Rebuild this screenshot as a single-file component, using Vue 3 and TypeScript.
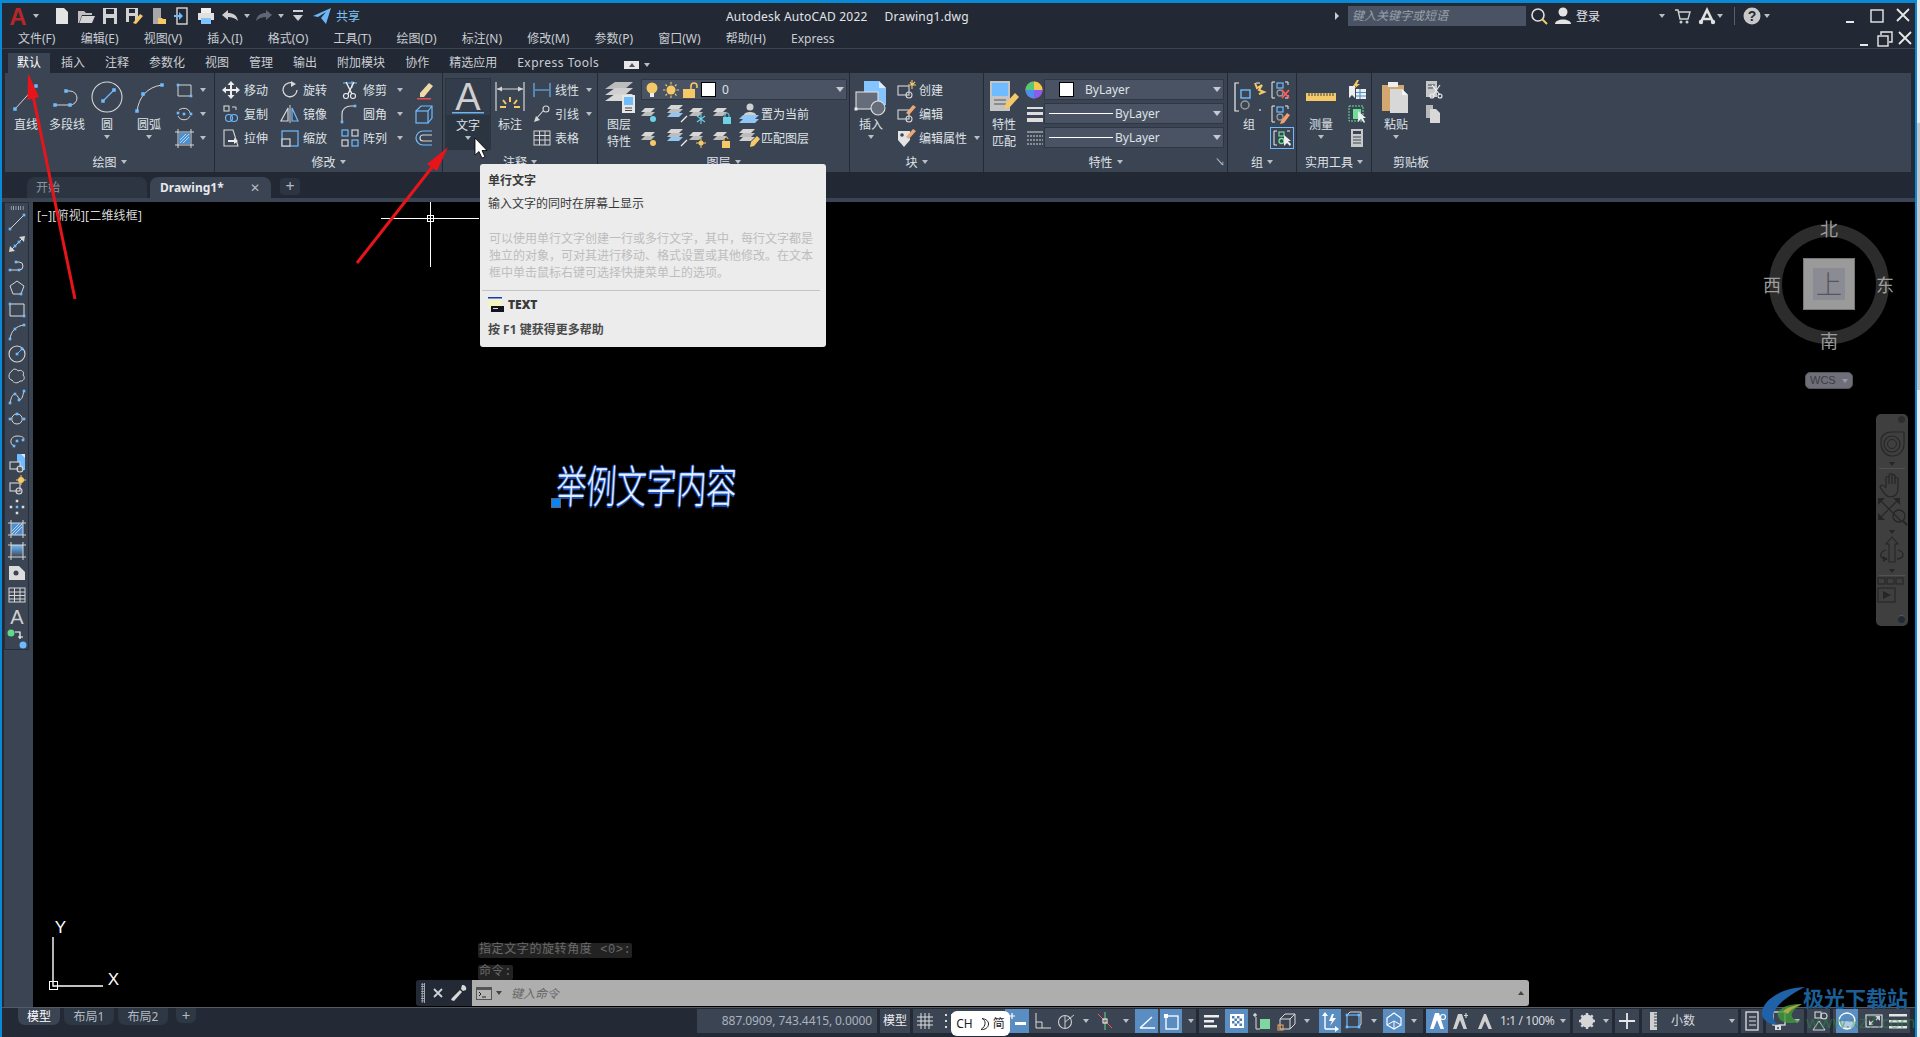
<template>
  <div class="window">
    <div class="edge-left"></div>
    <div class="content">
      <div class="accent"></div>

      <header class="titlebar">
        <div class="qat">
          <div class="logo"><Ico n="logo" :s="22" /><i class="caret"></i></div>
          <div v-for="q in quick" :key="q.k" class="qcell" :class="{ narrow: q.c }">
            <i v-if="q.c" class="caret"></i>
            <Ico v-else :n="q.k" />
          </div>
          <span class="share">共享</span>
        </div>
        <div class="title">Autodesk AutoCAD 2022<span class="dwg">Drawing1.dwg</span></div>
        <i class="tri-right"></i>
        <div class="search">键入关键字或短语</div>
        <div class="tcell"><Ico n="find" /></div>
        <div class="tcell"><Ico n="user" /></div>
        <span class="login">登录</span>
        <i class="caret login-caret"></i>
        <div class="tcell cart"><Ico n="cart" /></div>
        <div class="tcell"><Ico n="aLogo" /></div>
        <i class="caret a-caret"></i>
        <div class="tsep"></div>
        <div class="tcell"><Ico n="help" /></div>
        <i class="caret"></i>
        <div class="winbtns">
          <Ico n="wMin" /><Ico n="wMax" /><Ico n="wClose" />
        </div>
      </header>

      <nav class="menubar">
        <span v-for="m in menus" :key="m">{{ m }}</span>
        <div class="winbtns small">
          <Ico n="wMin" /><Ico n="wRestore" /><Ico n="wClose" />
        </div>
      </nav>

      <div class="ribbon-tabs">
        <span v-for="(t, i) in ribbonTabs" :key="t" class="rtab" :class="{ active: i === 0 }">{{ t }}</span>
        <span class="panel-toggle"><i class="caret up"></i></span>
        <i class="caret"></i>
      </div>

      <section class="ribbon">
        <!-- 绘图 -->
        <div class="panel p-draw">
          <div class="pbody">
            <div class="big w42"><Ico n="line32" :s="32" /><span>直线</span></div>
            <div class="big w40"><Ico n="pline32" :s="32" /><span>多段线</span></div>
            <div class="big w40"><Ico n="circle32" :s="32" /><span>圆</span><i class="caret"></i></div>
            <div class="big w44"><Ico n="arc32" :s="32" /><span>圆弧</span><i class="caret"></i></div>
            <div class="scol draw-col">
              <div v-for="r in drawCol" :key="r" class="sr"><Ico :n="r" /><i class="caret"></i></div>
            </div>
          </div>
          <div class="ptitle">绘图<i class="caret"></i></div>
        </div>

        <!-- 修改 -->
        <div class="panel p-modify">
          <div class="pbody">
            <div v-for="(col, ci) in modifyCols" :key="ci" class="scol" :class="'mod' + ci">
              <div v-for="r in col" :key="r.i" class="sr">
                <Ico :n="r.i" /><span v-if="r.t" class="st">{{ r.t }}</span><i v-if="r.c" class="caret"></i>
              </div>
            </div>
          </div>
          <div class="ptitle">修改<i class="caret"></i></div>
        </div>

        <!-- 注释 -->
        <div class="panel p-note">
          <div class="pbody">
            <div class="big hot">
              <div class="hot-top"><Ico n="text32" :s="32" /></div>
              <span>文字</span><i class="caret"></i>
            </div>
            <div class="big w38"><Ico n="dim32" :s="32" /><span>标注</span></div>
            <div class="scol note-col">
              <div v-for="r in noteCol" :key="r.i" class="sr">
                <Ico :n="r.i" /><span class="st">{{ r.t }}</span><i v-if="r.c" class="caret"></i>
              </div>
            </div>
          </div>
          <div class="ptitle">注释<i class="caret"></i></div>
        </div>

        <!-- 图层 -->
        <div class="panel p-layer">
          <div class="pbody">
            <div class="big w42"><Ico n="layer32" :s="32" /><span>图层<br />特性</span></div>
            <div class="layer-right">
              <div class="combo layer-combo">
                <Ico n="bulb" /><Ico n="sun" /><Ico n="lock" />
                <b class="swatch black"></b><span class="zero">0</span><i class="combo-caret"></i>
              </div>
              <div v-for="(row, ri) in layerRows" :key="ri" class="sr layer-row">
                <Ico v-for="x in row.i" :key="x" :n="x" :s="24" /><span class="st">{{ row.t }}</span>
              </div>
            </div>
          </div>
          <div class="ptitle">图层<i class="caret"></i></div>
        </div>

        <!-- 块 -->
        <div class="panel p-block">
          <div class="pbody">
            <div class="big w42"><Ico n="insert32" :s="32" /><span>插入</span><i class="caret"></i></div>
            <div class="scol block-col">
              <div v-for="r in blockCol" :key="r.i" class="sr">
                <Ico :n="r.i" /><span class="st">{{ r.t }}</span><i v-if="r.c" class="caret"></i>
              </div>
            </div>
          </div>
          <div class="ptitle">块<i class="caret"></i></div>
        </div>

        <!-- 特性 -->
        <div class="panel p-prop">
          <div class="pbody">
            <div class="big w40"><Ico n="match32" :s="32" /><span>特性<br />匹配</span></div>
            <div class="prop-grid">
              <div class="prop-row">
                <Ico n="wheel" /><div class="combo"><b class="swatch"></b><span class="by1">ByLayer</span><i class="combo-caret"></i></div>
              </div>
              <div class="prop-row">
                <Ico n="lweight" /><div class="combo"><b class="lsample"></b><span>ByLayer</span><i class="combo-caret"></i></div>
              </div>
              <div class="prop-row">
                <Ico n="ltype" /><div class="combo"><b class="lsample"></b><span>ByLayer</span><i class="combo-caret"></i></div>
              </div>
            </div>
          </div>
          <div class="ptitle">特性<i class="caret"></i><i class="launcher">↘</i></div>
        </div>

        <!-- 组 -->
        <div class="panel p-group">
          <div class="pbody">
            <div class="big w42"><Ico n="group32" :s="32" /><span>组</span></div>
            <div class="scol group-col">
              <div class="sr"><Ico n="ungroup" /></div>
              <div class="sr"><Ico n="groupEdit" /></div>
              <div class="sr on"><Ico n="groupSel" /></div>
            </div>
          </div>
          <div class="ptitle">组<i class="caret"></i></div>
        </div>

        <!-- 实用工具 -->
        <div class="panel p-util">
          <div class="pbody">
            <div class="big w48"><Ico n="ruler32" :s="32" /><span>测量</span><i class="caret"></i></div>
            <div class="scol util-col">
              <div class="sr"><Ico n="quick" /></div>
              <div class="sr"><Ico n="selSim" /></div>
              <div class="sr"><Ico n="calc" /></div>
            </div>
          </div>
          <div class="ptitle">实用工具<i class="caret"></i></div>
        </div>

        <!-- 剪贴板 -->
        <div class="panel p-clip">
          <div class="pbody">
            <div class="big w48"><Ico n="paste32" :s="32" /><span>粘贴</span><i class="caret"></i></div>
            <div class="scol clip-col">
              <div class="sr"><Ico n="cut" /></div>
              <div class="sr"><Ico n="copyDoc" /></div>
            </div>
          </div>
          <div class="ptitle clip-title">剪贴板</div>
        </div>
      </section>

      <div class="doc-tabs">
        <div class="dtab">开始</div>
        <div class="dtab current"><b>Drawing1*</b><span class="dclose">✕</span></div>
        <div class="dplus">+</div>
      </div>
      <div class="doc-bar"></div>

      <main class="work">
        <aside class="rail">
          <div class="toolbar">
            <div class="grip-dots"></div>
            <div v-for="t in toolIcons" :key="t" class="tool"><Ico :n="t" /></div>
          </div>
        </aside>

        <div class="canvas">
          <div class="vp-label">[−][俯视][二维线框]</div>

          <div class="cross"><i class="ch"></i><i class="cv"></i><i class="cb"></i></div>

          <div class="sample-text">举例文字内容</div>
          <div class="sample-grip"></div>

          <div class="viewcube">
            <div class="ring"></div>
            <div class="cube"><div class="cube-in">上</div></div>
            <span class="dir n">北</span><span class="dir s">南</span>
            <span class="dir w">西</span><span class="dir e">东</span>
            <div class="wcs">WCS<i class="caret"></i></div>
          </div>

          <div class="navbar">
            <i class="nav-dot top"></i>
            <Ico n="navWheel" :s="30" />
            <i class="caret"></i>
            <div class="nav-sep"></div>
            <Ico n="navHand" :s="30" />
            <Ico class="nav-zoom" n="navZoom" :s="30" />
            <i class="caret"></i>
            <Ico n="navOrbit" :s="30" />
            <i class="caret"></i>
            <div class="nav-sep"></div>
            <Ico n="navShow" :s="30" />
            <i class="nav-dot bottom"></i>
          </div>

          <svg class="ucs" width="100" height="80" viewBox="0 0 100 80">
            <path d="M20 22V71H70" fill="none" stroke="#fff" stroke-width="1.4" />
            <rect x="16.500" y="66.500" width="8" height="8" fill="none" stroke="#fff" />
            <text x="27.500" y="17.500" class="ucs-t">Y</text>
            <text x="80.500" y="70" class="ucs-t">X</text>
          </svg>

          <div class="history">
            <div><span>指定文字的旋转角度 &lt;0&gt;:</span></div>
            <div><span>命令:</span></div>
          </div>

          <div class="cmdline">
            <div class="cmd-dark">
              <i class="cmd-grip"></i>
              <Ico n="cmdX" :s="16" />
              <Ico n="wrench" :s="18" />
            </div>
            <div class="cmd-input">
              <Ico n="console" :s="18" />
              <i class="caret dark"></i>
              <span class="cmd-hint">键入命令</span>
              <i class="caret dark up end"></i>
            </div>
          </div>
        </div>
      </main>

      <footer class="bottom">
        <div class="layouts">
          <span class="ltab active">模型</span>
          <span class="ltab">布局1</span>
          <span class="ltab">布局2</span>
          <span class="lplus">+</span>
        </div>
        <div class="status">
          <div v-for="(g, gi) in statusGroups" :key="gi" class="sg" :style="{ width: g.w + 'px' }">
            <template v-for="(it, ii) in g.items" :key="ii">
              <i v-if="it.c" class="scaret" :style="{ width: it.w + 'px' }"><i class="caret"></i></i>
              <span v-else-if="it.t" class="stext" :class="it.cls" :style="{ width: it.w + 'px' }">{{ it.t }}</span>
              <div v-else class="sitem" :class="{ on: it.a }" :style="{ width: it.w + 'px' }">
                <Ico v-if="it.i" :n="it.i" />
              </div>
            </template>
          </div>
        </div>
      </footer>
    </div>

    <div class="edge-right">
      <div class="edge-blue"></div>
      <div class="edge-scroll"><i></i><i class="thumb"></i><i></i></div>
    </div>

    <!-- 覆盖层 -->
    <div class="tooltip">
      <div class="tt-title">单行文字</div>
      <div class="tt-sub">输入文字的同时在屏幕上显示</div>
      <div class="tt-desc">可以使用单行文字创建一行或多行文字，其中，每行文字都是独立的对象，可对其进行移动、格式设置或其他修改。在文本框中单击鼠标右键可选择快捷菜单上的选项。</div>
      <div class="tt-line"></div>
      <div class="tt-cmd"><Ico n="ttText" :s="16" /><b>TEXT</b></div>
      <div class="tt-help">按 F1 键获得更多帮助</div>
    </div>

    <div class="ime">CH <Ico n="moon" :s="14" /> 简</div>

    <svg class="marks" width="1920" height="1037" viewBox="0 0 1920 1037">
      <path d="M75 299 33.500 98" stroke="#e8141b" stroke-width="3" fill="none" />
      <path d="M28 73 39 97 27.500 100Z" fill="#e8141b" />
      <path d="M357 263 433 166" stroke="#e8141b" stroke-width="3" fill="none" />
      <path d="M448 147 437 171 427 164Z" fill="#e8141b" />
      <path d="M475 138V155L479 151.500 482 158 485 157 482 150.500H487Z" fill="#fff" stroke="#000" stroke-width="0.8" />
      <path d="M1805 987C1778 988 1760 1003 1762 1015 1764 1022 1771 1025 1779 1025 1768 1019 1770 1005 1805 987Z" fill="#1f62a8" />
      <path d="M1802 1004C1788 1003 1776 1009 1778 1016 1780 1023 1790 1025 1801 1021 1791 1020 1786 1014 1802 1004Z" fill="#3f9a3a" opacity=".8" />
      <path d="M1783 1011C1788 1007 1795 1005 1802 1004 1795 1007 1790 1010 1788 1014Z" fill="#c9b24a" opacity=".8" />
    </svg>
    <div class="wm-cn">极光下载站</div>
    <div class="wm-en">www.xz7.com</div>
  </div>
</template>

<script setup lang="ts">
import { h } from 'vue'

const gy = '#d6d6d6'
const bl = '#6ebcff'
const ye = '#f5c868'
const F = (d: string, c = gy) => `<path d="${d}" fill="${c}" stroke="none"/>`
const T = (d: string, c = gy, w = 1) => `<path d="${d}" stroke="${c}" stroke-width="${w}" fill="none"/>`
const G = (x: number, y: number, s = 2.600, c = bl) =>
  `<rect x="${x - s / 2}" y="${y - s / 2}" width="${s}" height="${s}" fill="${c}" stroke="none"/>`
const C = (x: number, y: number, r: number, c = gy, w = 1.1) =>
  `<circle cx="${x}" cy="${y}" r="${r}" stroke="${c}" stroke-width="${w}" fill="none"/>`
const D = (x: number, y: number, r: number, c = gy) =>
  `<circle cx="${x}" cy="${y}" r="${r}" fill="${c}" stroke="none"/>`
const R = (x: number, y: number, w: number, h: number, c = gy) =>
  `<rect x="${x}" y="${y}" width="${w}" height="${h}" fill="${c}" stroke="none"/>`
const B = (x: number, y: number, w: number, h: number, c = gy, sw = 1.1) =>
  `<rect x="${x}" y="${y}" width="${w}" height="${h}" fill="none" stroke="${c}" stroke-width="${sw}"/>`
const TX = (x: number, y: number, s: number, t: string, c = gy, bold = false) =>
  `<text x="${x}" y="${y}" font-size="${s}" text-anchor="middle" font-family="Liberation Sans" font-weight="${bold ? 700 : 400}" fill="${c}" stroke="none">${t}</text>`
const stack = F('M4 6H14L10 10H0Z') + F('M4 10H14L10 14H0Z', '#bdbdbd')

const icons: Record<string, string> = {
  logo: TX(10, 20, 24, 'A', '#b8262a', true),
  new: F('M4 2H12L16 6V18H4Z', '#e4e4e4'),
  open: F('M2 5H8L10 7H16V9H6L3 17H2Z', '#bfbfbf') + F('M6 10H19L16 17H3.500Z', '#d4d4d4'),
  save: F('M3 2H17V18H3Z', '#d2d2d2') + R(6, 3, 8, 5, '#232a35') + R(6, 12, 8, 6, '#232a35'),
  saveAs: F('M2 2H14V16H2Z', '#d2d2d2') + R(5, 3, 6, 4, '#232a35') + R(5, 10, 6, 6, '#232a35') + F('M9 17 16 8 19 10 12 18Z', ye),
  openWeb: F('M5 2H13V18H5Z', '#a8a8a8') + F('M10 12H14L15 13H18V18H10Z', ye),
  saveWeb: B(5, 2, 10, 16, '#d8d8d8', 1.4) + F('M2 9H7V6L11 10 7 14V11H2Z', bl),
  print: R(5, 2, 10, 5, '#eee') + R(2, 7, 16, 7, '#e0e0e0') + R(5, 12, 10, 6, '#7fc4ff'),
  undo: F('M2 9 8 4V7C13 7 17 9 18 15 15 12 12 11 8 11V14Z', '#cfcfcf'),
  redo: F('M18 9 12 4V7C7 7 3 9 2 15 5 12 8 11 12 11V14Z', '#5f6774'),
  qa: F('M5 4H15V6H5Z', '#cfcfcf') + F('M5 9H15L10 15Z', '#cfcfcf'),
  sendTo: F('M1 10 19 2 14 18 9 12 14 6 6 11Z', '#6db6f5'),
  find: C(9, 9, 6, '#e0e0e0', 1.6) + T('M13 13 18 18', ye, 2),
  user: D(10, 6, 4.500, '#e4e4e4') + F('M2 18C2 12 18 12 18 18Z', '#e4e4e4'),
  cart: T('M2 4H5L7 13H15L17 6H6', '#d0d0d0', 1.4) + D(8, 16, 1.500, '#d0d0d0') + D(14, 16, 1.500, '#d0d0d0'),
  aLogo: T('M4 16 10 4 16 16M6 13H14', '#e0e0e0', 2.600) + D(4, 16, 2.200, '#e0e0e0') + D(16, 16, 2.200, '#e0e0e0'),
  help: D(10, 10, 8.500, '#c8c8c8') + TX(10, 15, 14, '?', '#232a35', true),
  wMin: R(5, 15, 8, 2, '#e8e8e8'),
  wMax: B(4, 4, 12, 12, '#e8e8e8', 1.4),
  wRestore: B(3, 7, 10, 10, '#e8e8e8', 1.4) + T('M6 6V3H17V13H14', '#e8e8e8', 1.4),
  wClose: T('M4 3 16 15M16 3 4 15', '#e8e8e8', 1.800),

  line32: T('M5 28 26 5') + G(5, 28, 3.500) + G(26, 5, 3.500),
  pline32: T('M4 24H19A7 7 0 0 0 19 10H15') + G(4, 24, 3.500) + G(19, 24, 3.500) + G(15, 10, 3.500),
  circle32: C(16, 16, 15) + T('M13 19 23 9', bl, 1.3) + G(12, 20, 3.500) + G(23, 9, 3.500),
  arc32: T('M4 30C6 16 14 6 29 4') + G(4, 30, 3.500) + G(10, 13, 3.500) + G(29, 4, 3.500),
  rect: T('M4 5H17V16H4Z') + G(4, 5) + G(17, 16),
  ellipse: T('M5 6C9 3 15 4 16 9M16 12C14 17 6 17 4 12') + G(10, 10) + G(17, 10) + G(4, 9),
  hatch: F('M5 5H16V16H5Z', '#4e8fd0') + T('M1 4H20M1 17H20M4 1V20M17 1V20') + T('M6 15 15 6M9 15 15 9M6 12 12 6', '#cfe6ff', 0.8),
  move: F('M10 1 13.500 5H11V9H15V6.500L19 10 15 13.500V11H11V15H13.500L10 19 6.500 15H9V11H5V13.500L1 10 5 6.500V9H9V5H6.500Z', '#ececec'),
  rotate: T('M14 4A7 7 0 1 0 17 10', gy, 1.3) + F('M11 1V7L16 4Z', gy),
  trim: T('M12 1V8M3 3H17', bl, 1) + T('M6 2 12 14M14 2 8 14', '#eee', 1.4) + C(6, 16, 2.500, '#eee') + C(13, 16, 2.500, '#eee'),
  copy: B(3, 2, 5, 5, gy) + T('M11 3H15V6', gy) + C(8, 14, 3.500, bl) + C(13, 14, 3.500, bl),
  mirror: T('M8 4V17H1Z', gy, 1.2) + T('M12 4 18 17H12Z', bl, 1.2) + T('M10 1V19', gy, 1),
  fillet: T('M2 19V10C2 5 6 2 11 2H16', gy, 1.2) + G(2, 18) + G(15, 2),
  stretch: T('M3 2H12L17 18H3Z', gy, 1.1) + F('M7 12H13V10L17 13 13 16V14H7Z', '#ececec'),
  scale: B(2, 3, 16, 15, bl, 1.2) + F('M2 11H10V18H2Z', '#3b4453') + B(2, 11, 8, 7, gy, 1.2),
  array: B(2, 2, 6, 6, bl, 1.2) + B(12, 2, 6, 6, gy, 1.2) + B(2, 12, 6, 6, gy, 1.2) + B(12, 12, 6, 6, bl, 1.2),
  erase: F('M6 13 15 3 19 6 10 17H6Z', '#f0d9a8') + R(3, 18, 14, 1.500, '#e25050'),
  box3d: B(2, 7, 12, 12, bl, 1.2) + T('M2 7 7 2H18V14L14 19M14 7 18 2', bl, 1.2),
  offset: T('M18 3H9A7 7 0 0 0 9 17H18', bl, 1.2) + T('M18 7H9A3 3 0 0 0 9 13H18', gy, 1.2),

  text32: TX(16, 28, 38, 'A', '#cfcfcf') + R(0, 30, 32, 1.500, '#6eb6f0'),
  dim32: T('M2 1V30M30 1V30', gy, 1.2) + T('M3 8H29', gy, 1) + F('M3 8 8 5.500V10.500Z') + F('M29 8 24 5.500V10.500Z') +
    T('M16 16V21M9 19 12 23M23 19 20 23M6 26H12M20 26H26', ye, 2),
  dimLin: T('M2 3V17M18 3V17M3 10H17', bl, 1.1),
  leader: C(14, 5, 3, gy) + T('M11 7 4 15', gy, 1.1) + F('M2 18 4 12 8 16Z'),
  table: B(2, 3, 16, 14, gy, 1) + T('M2 7.500H18M2 12H18M7.500 3V17M13 3V17', gy, 1),

  layer32: F('M12 1H30L22 8H2Z', '#bcbcbc') + F('M12 7H30L22 14H2Z', '#cfcfcf') + F('M12 13H30L22 20H2Z', '#d8d8d8') +
    R(19, 14, 13, 18, '#e6e6e6') + R(21, 16, 9, 8, bl) + T('M22 27H29M22 29.500H29', '#444', 1),
  bulb: D(10, 8, 5.500, ye) + R(8, 13, 4, 4, '#eee'),
  sun: D(10, 10, 4.500, ye) + T('M10 2V4.500M10 15.500V18M2 10H4.500M15.500 10H18M4.500 4.500 6 6M14 14 15.500 15.500M15.500 4.500 14 6M6 14 4.500 15.500', ye, 1.1),
  lock: R(3, 9, 12, 9, ye) + T('M11 9V6A3 3 0 0 1 17 6V8', ye, 1.6),
  lyOff: stack + D(12, 17, 3, '#6fd3e8'),
  lyPrev: F('M6 3H18L14 7H2Z') + F('M6 7H18L14 11H2Z', '#bdbdbd') + F('M6 11H18L14 15H2Z', '#8fc6f5') + T('M22 14 16 20', '#eee', 1.2),
  lyFrz: stack + T('M12 12V22M8 14 16 20M16 14 8 20', '#6fd3e8', 1.1),
  lyLck: stack + R(10, 15, 8, 7, '#6fd3e8') + T('M12 15V13A2 2 0 0 1 16 13V15', '#6fd3e8'),
  lyCur: D(13, 5, 3.500, '#cfcfcf') + F('M7 13C7 9 19 9 19 13Z', '#cfcfcf') + F('M6 13H22L18 17H2Z', '#8fc6f5') + F('M6 17H22L18 21H2Z', '#8fc6f5'),
  lyOn: stack + D(12, 17, 3, ye),
  lyNext: F('M6 3H18L14 7H2Z') + F('M6 7H18L14 11H2Z', '#bdbdbd') + F('M6 11H18L14 15H2Z', '#8fc6f5') + T('M16 20 22 14', '#eee', 1.2),
  lyThaw: stack + D(12, 17, 2.500, ye) + T('M12 12V22M7 17H17', ye, 1),
  lyUnl: stack + R(9, 15, 8, 7, ye) + T('M11 15V13A2 2 0 0 1 15 13', ye),
  lyMatch: F('M6 3H18L14 7H2Z') + F('M6 7H18L14 11H2Z', '#bdbdbd') + F('M6 11H18L14 15H2Z', '#cfcfcf') + F('M14 16 20 10 23 13 17 20 13 21Z', ye),

  insert32: F('M9 0H24L31 7V24H9Z', '#84c4ff') + F('M24 0 31 7H24Z', '#dcecff') +
    F('M1 11H23V28H1Z', '#656d7a') + B(1, 11, 22, 17, '#e0e0e0') + D(23, 27, 7, '#656d7a') + C(23, 27, 7, '#e0e0e0') + G(1, 28, 3, '#eee'),
  blkNew: B(2, 6, 11, 9, gy) + C(13, 15, 3, gy) + T('M14 2 16 5 19 2M16 0V9M12 5H20', ye, 1.1),
  blkEdit: B(2, 6, 11, 9, gy) + C(13, 15, 3, gy) + F('M10 9 17 1 20 3 13 11Z', '#e8a878'),
  blkAttr: F('M2 3H14V12L8 19 2 12Z', '#e4e4e4') + D(6, 7, 1.800, '#3b4453') + F('M10 9 17 1 20 3 13 11Z', '#e8a878'),

  match32: R(2, 0, 20, 30, '#c4c4c4') + R(4, 2, 16, 13, bl) + T('M6 19H18M6 23H18', '#555', 1.1) + F('M18 22 27 12 31 16 22 26 16 28Z', ye),
  wheel: D(10, 10, 8.500, '#e86c3c') + F('M10 10V1.500A8.500 8.500 0 0 1 18.500 10Z', '#f2c94c') + F('M10 10H18.500A8.500 8.500 0 0 1 10 18.500Z', '#8a5cf0') + F('M10 10V18.500A8.500 8.500 0 0 1 1.500 10Z', '#4a90f0') + F('M10 10H1.500A8.500 8.500 0 0 1 10 1.500Z', '#52c878'),
  lweight: R(3, 3, 16, 2, '#ddd') + R(3, 8, 16, 3, '#ddd') + R(3, 14, 16, 4, '#ddd'),
  ltype: T('M3 4H19', gy, 1) + `<path d="M3 8H19M3 12H19M3 16H19" stroke="${gy}" stroke-width="1" stroke-dasharray="2 1" fill="none"/>`,

  group32: T('M6 2H2V30H6M23 2H27M27 30V28', '#eee', 1.2) + B(8, 9, 9, 8, bl, 1.4) + C(12, 24, 4, '#999', 1.500) + T('M22 2 24 7 29 4 26 9 31 11 26 13', ye, 2),
  ungroup: T('M5 2H2V18H5M15 2H18V5M18 15V18H15', '#eee') + B(7, 3, 6, 5, bl, 1.2) + C(10, 13, 3, '#999', 1.3) + T('M12 10 19 18M19 10 12 18', '#ff5b5b', 1.800),
  groupEdit: T('M5 2H2V18H5M15 2H18V5', '#eee') + B(7, 3, 6, 5, bl, 1.2) + C(10, 13, 3, '#999', 1.3) + F('M11 17 17 9 20 11 14 19 10 20Z', '#f0a070'),
  groupSel: T('M5 3H2V17H5M15 3H18', '#eee') + B(7, 4, 5, 4, '#6fe09a', 1.2) + C(9.500, 13, 2.500, '#6fe09a', 1.3) + F('M12 7V18L15 15 18 18 19 16 16 13H19Z', '#eee'),

  ruler32: R(1, 12, 30, 8, ye) + T('M4 12V15M7 12V15M10 12V15M13 12V15M16 12V15M19 12V15M22 12V15M25 12V15M28 12V15', '#3b4453', 1),
  quick: F('M2 6V18L5 15 8 18V6Z', '#eee') + R(9, 9, 10, 10, '#eee') + T('M9 12.500H19M9 16H19M13 9V19', '#4a8fd0', 1.1) + F('M10 0 6 6H9L7 9 13 4H10L12 0Z', ye),
  selSim: `<rect x="2" y="2" width="14" height="15" fill="none" stroke="#6fe09a" stroke-dasharray="2 1"/>` + R(6, 5, 8, 10, '#6fe09a') + F('M11 7V18L14 15 17 19 18 18 16 14H19Z', '#eee'),
  calc: R(4, 1, 12, 18, '#c8c8c8') + R(6, 3, 8, 3, '#3b4453') + T('M6 9H14M6 12H14M6 15H14', '#3b4453', 1.1),
  paste32: R(2, 4, 22, 26, '#d2a870') + F('M8 1H18V6H8Z', '#eee') + F('M10 8H22L28 14V32H10Z', '#d8d8d8') + F('M22 8 28 14H22Z', '#f4f4f4'),
  cut: R(3, 1, 11, 16, '#c8c8c8') + T('M5 5H12M5 8H10', '#3b4453') + T('M9 5 17 15M17 5 10 15', '#eee', 1.2) + C(9, 16, 2, '#eee') + C(17, 16, 2, '#eee'),
  copyDoc: F('M3 1H10V14H3Z', '#b8b8b8') + F('M7 5H13L17 9V19H7Z', '#d8d8d8'),

  tLine: T('M3 17 17 3') + G(3, 17) + G(17, 3),
  tRay: T('M5 15 15 5') + F('M18 2 17 8 12 3Z') + F('M2 18 3 12 8 17Z') + G(8, 12) + G(12, 8),
  tPline: T('M3 14H12A4 4 0 0 0 12 6H9') + G(3, 14) + G(12, 14) + G(9, 6),
  tPoly: T('M10 3 17 8 14 16H6L3 8Z') + G(14, 16),
  tRect: T('M3 4H17V16H3Z', '#e0e0e0') + G(3, 4) + G(17, 16),
  tArc: T('M3 17C4 9 9 4 17 3') + G(3, 17) + G(8, 7) + G(17, 3),
  tCircle: C(10, 10, 8) + T('M10 10 15 5', bl) + G(10, 10) + G(15, 5),
  tCloud: T('M5 5C6 2 10 3 11 5 14 3 18 6 16 9 19 12 16 16 13 15 11 18 6 17 5 14 1 14 1 7 5 5Z'),
  tSpline: T('M3 16C5 6 8 5 11 10S15 12 17 4') + G(3, 16) + G(8, 7) + G(12, 13) + G(17, 4),
  tEll: T('M10 5C3 5 3 15 10 15S17 5 10 5') + G(3, 10) + G(17, 10) + G(10, 5),
  tEllArc: T('M7 15C2 13 3 5 10 5S18 8 16 9') + G(7, 15) + G(10, 10) + G(16, 9),
  tInsert: F('M10 1H18V17H10Z', bl) + F('M18 1 14 1 18 5Z', '#dcecff') + F('M3 9H13V15H3Z', '#3b4453') + B(3, 9, 10, 7, gy) + C(13, 16, 3, gy) + D(13, 16, 2, '#555'),
  tBlock: B(3, 8, 10, 8, gy) + C(12, 16, 3, gy) + D(14, 5, 3, ye) + T('M14 0V10M9 5H19', ye, 1),
  tPoint: G(10, 4, 2.500, '#ddd') + G(4, 10, 2.500, '#ddd') + G(16, 10, 2.500, '#ddd') + G(10, 16, 2.500, '#ddd') + G(10, 10, 2.500, bl),
  tHatch: F('M4 4H16V16H4Z', '#4e8fd0') + T('M1 4H19M1 16H19M4 1V19M16 1V19') + T('M5 15 15 5M8 15 15 8M5 12 12 5', '#cfe6ff', 0.8),
  tGrad: `<defs><linearGradient id="gr" x1="0" y1="0" x2="0" y2="1"><stop offset="0" stop-color="#6ebcff"/><stop offset="1" stop-color="#3b4453"/></linearGradient></defs><rect x="4" y="4" width="12" height="12" fill="url(#gr)"/>` + T('M1 4H19M1 16H19M4 1V19M16 1V19'),
  tRegion: F('M2 3H12L18 9V17H2Z', '#dcdcdc') + D(9, 10, 2.500, '#3b4453'),
  tTable: B(2, 3, 16, 14, gy, 1) + T('M2 7H18M2 10.500H18M2 14H18M7.500 3V17M13 3V17', gy, 1),
  tText: TX(10, 17, 20, 'A', '#cfcfcf'),
  tAdd: D(4, 4, 3.500, '#5fd98a') + D(16, 16, 3.500, bl) + T('M8 3H13V10M11 8H16', '#fff', 1.2),

  cmdX: T('M4 4 12 12M12 4 4 12', '#cfd3d8', 1.800),
  wrench: F('M13 1C16 1 18 3 17 6L14 7 12 5ZM11 6 13 8 5 17 2 16 3 14Z', '#d8d8d8'),
  console: R(1, 3, 16, 13, '#555') + R(2, 6, 14, 9, '#b4b4b4') + T('M4 8 6 10 4 12M7 13H11', '#222', 1),

  grid: T('M6 2V18M10 2V18M14 2V18M2 6H18M2 10H18M2 14H18', '#e0e0e0', 1),
  snap: G(7, 4, 2, '#ddd') + G(13, 4, 2, '#ddd') + G(7, 10, 2, '#ddd') + G(13, 10, 2, '#ddd') + G(7, 16, 2, '#ddd') + G(13, 16, 2, '#ddd'),
  infer: T('M5 2V8M2 5H8', '#fff', 1.2) + R(8, 11, 11, 3, '#fff'),
  ortho: T('M4 2V17H19M4 11H10V17', '#dcdcdc', 1),
  polar: C(9, 11, 6.500, '#cfcfcf') + T('M9 11 18 4', '#cfcfcf') + T('M9 5V17', '#cfcfcf', 1),
  osnap: T('M10 1V19', '#5fd98a') + T('M3 3 17 17', '#ff5555') + B(8, 8, 4, 4, '#fff', 1),
  iso: T('M3 17H18M3 17 15 6', '#fff', 1.4),
  track: B(5, 5, 12, 13, '#fff', 1.3) + G(5, 5, 4, '#fff'),
  lw: R(3, 4, 15, 2.500, '#eee') + R(3, 9, 10, 2.500, '#eee') + R(3, 14, 13, 2.500, '#eee'),
  transp: R(3, 3, 14, 14, '#fff') + R(5, 5, 2.500, 2.500, '#4f7fb0') + R(10, 5, 2.500, 2.500, '#4f7fb0') + R(7.500, 7.500, 2.500, 2.500, '#4f7fb0') + R(12.500, 7.500, 2.500, 2.500, '#4f7fb0') + R(5, 10, 2.500, 2.500, '#4f7fb0') + R(10, 10, 2.500, 2.500, '#4f7fb0') + R(7.500, 12.500, 2.500, 2.500, '#4f7fb0') + R(12.500, 12.500, 2.500, 2.500, '#4f7fb0'),
  selCyc: T('M3 2V6M1 4H5', '#fff', 1) + T('M4 6V18H8', '#ddd') + R(8, 8, 10, 10, '#7fd6a0'),
  cube3: T('M3 8H13V18H3ZM3 8 8 3H18V13L13 18M13 8 18 3', '#dcdcdc') + B(1, 14, 5, 5, '#f0a050', 1.1),
  ucsDyn: T('M5 18V4M5 18H18', '#fff', 1.4) + F('M5 1 8 5H2Z', '#fff') + F('M19 18 15 15V21Z', '#fff') + F('M12 3 9 10H12L10 15 16 7H12.500L14 3Z', '#fff'),
  gizmo: B(4, 4, 12, 12, bl, 1.2) + T('M4 4 7 1H18V13L16 16', '#dcdcdc', 1) + G(4, 4) + G(16, 4) + G(4, 16) + G(16, 16),
  gizmo2: T('M10 2 17 7V14L10 18 3 14V7Z', '#fff', 1.2) + T('M10 10V18M10 10 3 14M10 10 17 14', '#fff', 1),
  anno: F('M8 2 12 2 17 18H13.500L10 9 6.500 18H3Z', '#fff') + C(16, 6, 2.500, '#fff', 1.1),
  annoA: F('M8 3 12 3 17 18H13.500L10 9 6.500 18H3Z', '#cfcfcf') + T('M16 2V7M14 4.500H18', '#cfcfcf', 1.2),
  annoB: F('M9 3 11 3 17 18H13.500L10 10 6.500 18H3Z', '#cfcfcf'),
  gear: D(10, 10, 6.500, '#d6d6d6') + D(10, 10, 2.500, '#3b4453') + T('M10 2V18M2 10H18M4.300 4.300 15.700 15.700M15.700 4.300 4.300 15.700', '#d6d6d6', 2.400),
  plus: T('M10 2V18M2 10H18', '#e8e8e8', 1.800),
  unit: R(6, 1, 7, 18, '#cfcfcf') + T('M10 3H13M10 6H13M10 9H13M10 12H13M10 15H13', '#3b4453', 1),
  quickP: B(4, 1, 12, 18, '#e0e0e0', 1.3) + T('M7 6H14M7 10H14M7 14H14', '#e0e0e0', 1.1),
  isolate: B(5, 1, 12, 13, '#ddd', 1.3) + R(7, 14, 6, 5, '#ddd') + D(10, 17, 1, '#3b4453'),
  hardw: B(6, 1, 6, 6, '#d6d6d6') + C(15, 5, 3, '#d6d6d6') + T('M10 10 16 19H4Z', '#d6d6d6'),
  hw: C(10, 10, 8, '#fff', 1.3) + F('M2 11C8 8 13 13 18 9 17 15 13 18 10 18 6 18 3 15 2 11Z', 'rgba(255,255,255,.55)'),
  clean: B(2, 4, 16, 12, '#e0e0e0', 1.1) + T('M6 13 9 10M12 9 15 6', '#d0d0d0', 1.2) + F('M5 9 5 14 9 14Z') + F('M16 5 11 5 16 10Z'),
  burger: R(1, 3, 18, 2.500, '#e4e4e4') + R(1, 9, 18, 2.500, '#e4e4e4') + R(1, 15, 18, 2.500, '#e4e4e4'),

  ttText: R(0, 0, 14, 1.500, '#1a34c8') + R(0, 2, 14, 9, '#f4f4c0') + R(3, 9, 13, 6, '#15151f') + R(5, 11, 5, 1, '#ddd'),
  moon: T('M6 1.500C10 3 10.500 9 5 12.500 9 13 12.500 10.500 12.500 7 12.500 4 10 2 6 1.500Z', '#222', 1),

  navWheel: T('M4 12C4 6 9 3 15 3H27V15C27 22 22 27 15 27 9 27 4 21 4 15Z', '#262626', 1.2) + C(15, 15, 8, '#262626', 1.2) + C(15, 15, 4.500, '#262626', 1),
  navHand: T('M9 17V8A1.500 1.500 0 0 1 12 8V14M12 13V5A1.500 1.500 0 0 1 15 5V14M15 13V6A1.500 1.500 0 0 1 18 6V14M18 14V9A1.500 1.500 0 0 1 21 9V18C21 24 18 27 13 27 9 27 6 22 3 17 4 14 7 15 9 18', '#262626', 1.2),
  navZoom: T('M2 2 24 24M22 2 2 22', '#262626', 1.2) + F('M1 1H8L1 8Z', '#262626') + F('M23 1H16L23 8Z', '#262626') + F('M1 23H8L1 16Z', '#262626') + C(22, 19, 6, '#262626', 1.3) + T('M26 24 30 28', '#262626', 2),
  navOrbit: T('M15 1 21 8H18V26H12V8H9Z', '#262626', 1.1) + T('M9 14C2 16 2 22 9 23M21 14C28 16 28 22 20 23', '#262626', 1.3) + F('M11 23 6 20V26Z', '#262626'),
  navShow: B(1, 1, 7, 6, '#262626', 1.1) + B(10, 1, 7, 6, '#262626', 1.1) + B(19, 1, 7, 6, '#262626', 1.1) + B(1, 11, 17, 14, '#262626', 1.1) + F('M6 14 14 18 6 22Z', '#262626'),
}

const Ico = (p: { n: string; s?: number }) => {
  const s = p.s ?? 20
  return h('svg', {
    class: 'ico',
    width: s,
    height: s,
    viewBox: `0 0 ${s} ${s}`,
    innerHTML: icons[p.n] ?? '',
  })
}
Ico.props = ['n', 's']

const quick = [
  { k: 'new' }, { k: 'open' }, { k: 'save' }, { k: 'saveAs' }, { k: 'openWeb' }, { k: 'saveWeb' }, { k: 'print' },
  { k: 'undo' }, { k: 'c1', c: true }, { k: 'redo' }, { k: 'c2', c: true }, { k: 'qa' }, { k: 'sendTo' },
]

const menus = ['文件(F)', '编辑(E)', '视图(V)', '插入(I)', '格式(O)', '工具(T)', '绘图(D)', '标注(N)', '修改(M)', '参数(P)', '窗口(W)', '帮助(H)', 'Express']
const ribbonTabs = ['默认', '插入', '注释', '参数化', '视图', '管理', '输出', '附加模块', '协作', '精选应用', 'Express Tools']

const drawCol = ['rect', 'ellipse', 'hatch']
const modifyCols = [
  [{ i: 'move', t: '移动' }, { i: 'copy', t: '复制' }, { i: 'stretch', t: '拉伸' }],
  [{ i: 'rotate', t: '旋转' }, { i: 'mirror', t: '镜像' }, { i: 'scale', t: '缩放' }],
  [{ i: 'trim', t: '修剪', c: true }, { i: 'fillet', t: '圆角', c: true }, { i: 'array', t: '阵列', c: true }],
  [{ i: 'erase' }, { i: 'box3d' }, { i: 'offset' }],
]
const noteCol = [
  { i: 'dimLin', t: '线性', c: true },
  { i: 'leader', t: '引线', c: true },
  { i: 'table', t: '表格' },
]
const layerRows = [
  { i: ['lyOff', 'lyPrev', 'lyFrz', 'lyLck', 'lyCur'], t: '置为当前' },
  { i: ['lyOn', 'lyNext', 'lyThaw', 'lyUnl', 'lyMatch'], t: '匹配图层' },
]
const blockCol = [
  { i: 'blkNew', t: '创建' },
  { i: 'blkEdit', t: '编辑' },
  { i: 'blkAttr', t: '编辑属性', c: true },
]

const toolIcons = ['tLine', 'tRay', 'tPline', 'tPoly', 'tRect', 'tArc', 'tCircle', 'tCloud', 'tSpline', 'tEll', 'tEllArc', 'tInsert', 'tBlock', 'tPoint', 'tHatch', 'tGrad', 'tRegion', 'tTable', 'tText', 'tAdd']

interface StatusItem { w: number; i?: string; a?: boolean; c?: boolean; t?: string; cls?: string }
const I = (i: string, w: number, a = false): StatusItem => ({ i, w, a })
const S = (w: number): StatusItem => ({ w })
const K = (w: number): StatusItem => ({ w, c: true })
const X = (t: string, w: number, cls: string): StatusItem => ({ t, w, cls })

const statusGroups: { w: number; items: StatusItem[] }[] = [
  { w: 180, items: [X('887.0909, 743.4415, 0.0000', 175, 'coord')] },
  { w: 30, items: [X('模型', 30, 'model')] },
  {
    w: 283,
    items: [
      I('grid', 24), I('snap', 24), S(44), I('infer', 24, true), S(1), I('ortho', 24), I('polar', 24), S(2), K(12), S(1),
      I('osnap', 24), S(2), K(13), S(3), I('iso', 23, true), S(2), I('track', 22, true), S(3), K(11),
    ],
  },
  {
    w: 224,
    items: [
      I('lw', 24), S(2), I('transp', 23, true), S(2), I('selCyc', 24), S(1), I('cube3', 24), S(2), K(12), S(6),
      I('ucsDyn', 22, true), S(1), I('gizmo', 22), S(4), K(12), S(3), I('gizmo2', 22, true), S(3), K(12),
    ],
  },
  { w: 144, items: [I('anno', 22, true), S(1), I('annoA', 22), S(2), I('annoB', 24), X('1:1 / 100%', 61, 'scale-t'), K(10)] },
  { w: 39, items: [I('gear', 27), K(12)] },
  { w: 24, items: [I('plus', 24)] },
  { w: 96, items: [I('unit', 24), X('小数', 60, 'unit-t'), K(12)] },
  { w: 22, items: [I('quickP', 22)] },
  { w: 38, items: [I('isolate', 24), K(14)] },
  { w: 23, items: [I('hardw', 23)] },
  { w: 77, items: [S(3), I('hw', 22, true), S(4), I('clean', 24), I('burger', 24)] },
]
</script>

<style>
html,
body {
  margin: 0;
  background: #222934;
}
</style>

<style scoped>
.window {
  position: relative;
  display: flex;
  width: 1920px;
  height: 1037px;
  overflow: hidden;
  background: #222934;
  font-family: "Noto Sans", "Noto Sans CJK SC", sans-serif;
  font-size: 12px;
  line-height: 17px;
  color: #c9cdd3;
}
.ico {
  display: block;
  flex: none;
  overflow: visible;
}
.caret {
  display: block;
  flex: none;
  width: 0;
  height: 0;
  border-left: 3px solid transparent;
  border-right: 3px solid transparent;
  border-top: 4px solid #b9bdc4;
}
.caret.up {
  border-top: 0;
  border-bottom: 4px solid #555;
}
.caret.dark {
  border-top-color: #444;
}
.caret.dark.up {
  border-top: 0;
  border-bottom: 4px solid #444;
}
.edge-left {
  flex: none;
  width: 2px;
  background: #0a8ad6;
}
.content {
  flex: none;
  width: 1913px;
  display: flex;
  flex-direction: column;
}
.edge-right {
  flex: none;
  width: 5px;
  display: flex;
}
.edge-blue {
  width: 2px;
  background: #0a8ad6;
}
.edge-scroll {
  flex: 1;
  display: flex;
  flex-direction: column;
}
.edge-scroll i {
  flex: 1;
  background: #ececec;
}
.edge-scroll .thumb {
  flex: none;
  height: 267px;
  background: #c6c6c6;
}
.edge-scroll i:first-child {
  flex: none;
  height: 123px;
}
.accent {
  flex: none;
  height: 3px;
  background: #0a8ad6;
}

/* 标题栏 */
.titlebar {
  flex: none;
  height: 26px;
  display: flex;
  align-items: center;
  color: #e2e4e8;
}
.qat {
  flex: none;
  width: 724px;
  display: flex;
  align-items: center;
  padding-left: 6px;
  box-sizing: border-box;
}
.logo {
  width: 42px;
  display: flex;
  align-items: center;
  gap: 3px;
}
.qcell {
  width: 24px;
  display: flex;
  justify-content: center;
}
.qcell.narrow {
  width: 10px;
}
.share {
  margin-left: 2px;
  color: #7ec2f5;
}
.title {
  flex: none;
  width: 609px;
  box-sizing: border-box;
  white-space: nowrap;
  letter-spacing: 0.2px;
}
.dwg {
  margin-left: 17px;
}
.tri-right {
  flex: none;
  width: 0;
  height: 0;
  border-top: 4px solid transparent;
  border-bottom: 4px solid transparent;
  border-left: 4px solid #c9cdd3;
  margin-right: 9px;
}
.search {
  flex: none;
  width: 178px;
  height: 20px;
  line-height: 20px;
  background: #4a5364;
  padding-left: 4px;
  box-sizing: border-box;
  font-style: italic;
  color: #9aa0aa;
}
.tcell {
  flex: none;
  width: 24px;
  display: flex;
  justify-content: center;
}
.search + .tcell {
  margin-left: 1px;
}
.login {
  flex: none;
  width: 83px;
  margin-left: 1px;
}
.login-caret {
  margin-right: 6px;
}
.a-caret {
  margin-left: -2px;
}
.tsep {
  flex: none;
  width: 1px;
  height: 18px;
  background: #59616e;
  margin: 0 5px 0 11px;
}
.winbtns {
  margin-left: auto;
  margin-right: 2px;
  display: flex;
  gap: 6px;
}
.menubar {
  flex: none;
  height: 19px;
  display: flex;
  align-items: center;
  gap: 25.200px;
  padding-left: 16px;
  border-bottom: 1px solid #3b4453;
  white-space: nowrap;
}
.winbtns.small {
  gap: 0;
  margin-right: 0;
}

/* 功能区选项卡 */
.ribbon-tabs {
  flex: none;
  height: 24px;
  display: flex;
  align-items: flex-end;
  padding-left: 6px;
  gap: 2px;
}
.rtab {
  height: 20px;
  line-height: 19px;
  padding: 0 9px;
  white-space: nowrap;
}
.rtab:nth-child(11) {
  letter-spacing: 0.5px;
}
.rtab.active {
  background: #3b4453;
  color: #fff;
}
.panel-toggle {
  width: 15px;
  height: 8px;
  margin: 0 0 4px 14px;
  background: #e6e6e6;
  display: flex;
  justify-content: center;
  align-items: center;
}
.ribbon-tabs > .caret {
  margin: 0 0 6px 3px;
}

/* 功能区 */
.ribbon {
  flex: none;
  height: 99px;
  margin: 0 4px 0 3px;
  display: flex;
  background: #3b4453;
}
.panel {
  flex: none;
  box-sizing: border-box;
  display: flex;
  flex-direction: column;
  border-right: 1px solid #232a35;
  color: #dfe2e6;
}
.pbody {
  flex: 1;
  display: flex;
  min-height: 0;
}
.ptitle {
  position: relative;
  flex: none;
  height: 20px;
  display: flex;
  align-items: center;
  justify-content: center;
  gap: 4px;
}
.launcher {
  position: absolute;
  right: 2px;
  top: 2px;
  font-style: normal;
  font-size: 10px;
  color: #b9bdc4;
}
.p-draw { width: 210px; }
.p-modify { width: 228px; }
.p-note { width: 155px; }
.p-layer { width: 252px; }
.p-block { width: 134px; }
.p-prop { width: 244px; }
.p-group { width: 69px; }
.p-util { width: 75px; }
.p-clip { flex: 1; border-right: 0; }
.clip-title { width: 78px; }

.big {
  flex: none;
  display: flex;
  flex-direction: column;
  align-items: center;
  padding-top: 8px;
  box-sizing: border-box;
  text-align: center;
}
.big > span {
  margin-top: 3px;
  white-space: nowrap;
}
.big > .caret {
  margin-top: 2px;
}
.w38 { width: 38px; }
.w40 { width: 40px; }
.w42 { width: 42px; }
.w44 { width: 44px; }
.w48 { width: 48px; }
.big.hot {
  width: 46px;
  height: 72px;
  margin: 5px 0 0 2px;
  padding-top: 0;
  background: #2b3441;
}
.hot-top {
  width: 100%;
  height: 38px;
  display: flex;
  justify-content: center;
  padding-top: 3px;
  box-sizing: border-box;
  background: #333c4a;
  border: 1px solid #2b3441;
}
.big.hot > span {
  margin-top: 1px;
}
.scol {
  flex: none;
  display: flex;
  flex-direction: column;
  padding-top: 5px;
  box-sizing: border-box;
}
.sr {
  height: 24px;
  display: flex;
  align-items: center;
  white-space: nowrap;
}
.sr > .caret {
  margin-left: auto;
}
.st {
  margin-left: 3px;
}
.draw-col { width: 32px; margin-left: 3px; }
.mod0 { width: 59px; margin-left: 6px; }
.mod1 { width: 60px; }
.mod2 { width: 74px; padding-right: 11px; }
.note-col { width: 60px; margin-left: 3px; }
.block-col { width: 84px; margin-left: 4px; }
.group-col { width: 24px; }
.util-col { width: 20px; margin-left: 2px; }
.clip-col { width: 20px; margin-left: 3px; }
.sr.on {
  height: 22px;
  justify-content: center;
  border: 1px solid #6ebcff;
  box-sizing: border-box;
  margin-top: 1px;
}
.layer-right {
  flex: none;
  width: 206px;
  padding-top: 6px;
  box-sizing: border-box;
  margin-left: 1px;
}
.combo {
  height: 21px;
  display: flex;
  align-items: center;
  background: #4a5364;
  border: 1px solid #2f3744;
  box-sizing: border-box;
  position: relative;
  flex: 1;
  color: #dfe2e6;
  padding-left: 4px;
}
.layer-combo {
  padding-left: 0;
}
.layer-combo .ico {
  margin-right: -1px;
}
.swatch {
  display: block;
  width: 15px;
  height: 15px;
  background: #fff;
  border: 1px solid #000;
  box-sizing: border-box;
  margin-left: 10px;
}
.swatch.black {
  margin-left: 2px;
}
.zero {
  margin-left: 6px;
}
.by1 {
  margin-left: 11px;
}
.lsample {
  display: block;
  width: 64px;
  height: 1px;
  background: #fff;
  margin-right: 2px;
}
.combo-caret {
  position: absolute;
  right: 2px;
  top: 7px;
  width: 0;
  height: 0;
  border-left: 4px solid transparent;
  border-right: 4px solid transparent;
  border-top: 5px solid #c6cad0;
}
.layer-row {
  position: relative;
  top: 2px;
}
.layer-row .ico {
  margin-right: 0;
}
.layer-row .st {
  margin-left: 0;
}
.prop-grid {
  flex: none;
  width: 200px;
  padding-top: 6px;
  box-sizing: border-box;
  display: flex;
  flex-direction: column;
  gap: 3px;
}
.prop-row {
  display: flex;
  align-items: center;
}

/* 文档选项卡 */
.doc-tabs {
  flex: none;
  height: 26px;
  display: flex;
  align-items: flex-end;
  padding-left: 25px;
  gap: 3px;
}
.dtab {
  width: 120px;
  height: 21px;
  line-height: 21px;
  padding-left: 9px;
  box-sizing: border-box;
  background: #2d3542;
  border-radius: 8px 8px 0 0;
  color: #8d95a1;
  position: relative;
}
.dtab.current {
  width: 121px;
  padding-left: 10px;
  background: #3b4453;
  color: #e6e8eb;
}
.dclose {
  position: absolute;
  right: 11px;
  top: 0;
  color: #b5bac2;
  font-size: 12px;
}
.dplus {
  width: 20px;
  height: 17px;
  margin: 0 0 3px 6px;
  border-radius: 4px;
  background: #2d3542;
  color: #b5bac2;
  text-align: center;
  font-size: 16px;
  line-height: 16px;
}
.doc-bar {
  flex: none;
  height: 4px;
  background: #3b4453;
}

/* 工作区 */
.work {
  flex: none;
  height: 805px;
  display: flex;
}
.rail {
  flex: none;
  width: 31px;
  box-sizing: border-box;
  background: #3b4453;
  margin-left: 0;
  border-left: 2px solid #232a35;
  padding-right: 4px;
}
.toolbar {
  height: 448px;
  box-sizing: border-box;
  border: 1px solid #272e3a;
  display: flex;
  flex-direction: column;
  align-items: center;
}
.grip-dots {
  flex: none;
  width: 14px;
  height: 4px;
  margin: 3px 0 1px;
  background-image: radial-gradient(#aeb3ba 0.7px, transparent 0.8px);
  background-size: 2.400px 2px;
}
.tool {
  flex: none;
  height: 21.940px;
  display: flex;
  align-items: center;
}
.canvas {
  position: relative;
  flex: 1;
  background: #000;
  overflow: hidden;
}
.vp-label {
  position: absolute;
  left: 4px;
  top: 5px;
  color: #d8d8d8;
  letter-spacing: 0.2px;
}
.cross {
  position: absolute;
  left: 348px;
  top: 0;
  width: 98px;
  height: 65px;
}
.ch {
  position: absolute;
  left: 0;
  right: 0;
  top: 16px;
  height: 1px;
  background: #fff;
}
.cv {
  position: absolute;
  left: 49px;
  top: 0;
  bottom: 0;
  width: 1px;
  background: #fff;
}
.cb {
  position: absolute;
  left: 46px;
  top: 13px;
  width: 7px;
  height: 7px;
  box-sizing: border-box;
  border: 1px solid #fff;
}
.sample-text {
  position: absolute;
  left: 525px;
  top: 259px;
  width: 180px;
  white-space: nowrap;
  font-family: "Noto Sans CJK SC", sans-serif;
  font-weight: 300;
  font-size: 30px;
  line-height: 30px;
  color: #e6f0ff;
  transform: scaleY(1.5) skewX(-5deg);
  transform-origin: left top;
  text-shadow: 1px 0 0 #1a4fb8, -1px 0 0 #1a4fb8, 0 1px 0 #1a4fb8, 0 -1px 0 #1a4fb8;
}
.sample-grip {
  position: absolute;
  left: 518px;
  top: 296px;
  width: 10px;
  height: 10px;
  background: #0a84f5;
  border: 1px solid #666;
  box-sizing: border-box;
}

.viewcube {
  position: absolute;
  left: 1726px;
  top: 0;
  width: 140px;
  height: 200px;
}
.ring {
  position: absolute;
  left: 10px;
  top: 22px;
  width: 120px;
  height: 120px;
  box-sizing: border-box;
  border: 13px solid #2c2c2c;
  border-radius: 50%;
}
.cube {
  position: absolute;
  left: 44px;
  top: 56px;
  width: 52px;
  height: 52px;
  box-sizing: border-box;
  background: #9a9a9a;
  border: 1px solid #777;
  display: flex;
  align-items: center;
  justify-content: center;
}
.cube-in {
  width: 32px;
  height: 32px;
  background: #8b8b93;
  color: #55555c;
  font-weight: 300;
  font-size: 26px;
  line-height: 32px;
  text-align: center;
}
.dir {
  position: absolute;
  width: 20px;
  text-align: center;
  font-size: 18px;
  line-height: 20px;
  color: #9c9c9c;
}
.dir.n { left: 60px; top: 17px; }
.dir.s { left: 60px; top: 129px; }
.dir.w { left: 3px; top: 73px; }
.dir.e { left: 116px; top: 73px; }
.wcs {
  position: absolute;
  left: 46px;
  top: 170px;
  width: 48px;
  height: 17px;
  box-sizing: border-box;
  border: 1px solid #55555c;
  border-radius: 5px;
  background: #6f6f79;
  color: #3c3c44;
  font-family: "Liberation Sans", sans-serif;
  font-size: 11px;
  line-height: 15px;
  padding-left: 4px;
  display: flex;
  align-items: center;
  gap: 6px;
}
.wcs .caret {
  border-top-color: #9a9aa4;
}
.navbar {
  position: absolute;
  left: 1843px;
  top: 212px;
  width: 32px;
  height: 212px;
  box-sizing: border-box;
  padding-top: 15px;
  background: #3f3f3f;
  border-radius: 5px;
  display: flex;
  flex-direction: column;
  align-items: center;
}
.navbar .caret {
  border-top-color: #262626;
  margin: 3px 0 2px;
}
.nav-zoom {
  margin-top: -3px;
}
.nav-sep {
  flex: none;
  width: 26px;
  height: 1px;
  background: #525252;
  margin-bottom: 1px;
}
.nav-dot {
  position: absolute;
  right: 3px;
  width: 7px;
  height: 7px;
  border-radius: 50%;
  background: #2e2e2e;
}
.nav-dot.top { top: 2px; }
.nav-dot.bottom { bottom: 3px; }
.ucs {
  position: absolute;
  left: 0;
  bottom: 12px;
}
.ucs-t {
  font-family: "Liberation Sans", sans-serif;
  font-size: 17px;
  fill: #fff;
  text-anchor: middle;
}
.history {
  position: absolute;
  left: 445px;
  top: 740px;
  font-family: "Liberation Mono", "Noto Sans CJK SC", monospace;
  letter-spacing: 0.6px;
  color: #6a6a6a;
  display: flex;
  flex-direction: column;
  gap: 5px;
}
.history span {
  display: inline-block;
  height: 15px;
  line-height: 15px;
  background: #222;
  padding: 0 1px;
  border-radius: 2px;
}
.cmdline {
  position: absolute;
  left: 383px;
  top: 778px;
  width: 1113px;
  height: 26px;
  display: flex;
}
.cmd-dark {
  flex: none;
  width: 56px;
  background: #232a35;
  border-radius: 3px 0 0 3px;
  display: flex;
  align-items: center;
  gap: 3px;
  padding-left: 5px;
  box-sizing: border-box;
}
.cmd-grip {
  width: 4px;
  height: 20px;
  background-image: radial-gradient(#aeb3ba 0.8px, transparent 0.9px);
  background-size: 2.400px 2.400px;
  margin-right: 2px;
}
.cmd-input {
  flex: 1;
  background: #aeaeae;
  border-radius: 0 3px 3px 0;
  display: flex;
  align-items: center;
  padding-left: 3px;
  gap: 3px;
}
.cmd-hint {
  margin-left: 6px;
  font-style: italic;
  color: #666;
}
.caret.end {
  margin-left: auto;
  margin-right: 5px;
}

/* 底部 */
.bottom {
  flex: 1;
  display: flex;
  border-top: 1px solid #555a63;
  background: #232a35;
}
.layouts {
  flex: none;
  width: 695px;
  height: 17px;
  display: flex;
  padding-left: 16px;
  box-sizing: border-box;
  gap: 4px;
}
.ltab {
  width: 50px;
  text-align: center;
  background: #2e3744;
  border-radius: 0 0 7px 7px;
  color: #b5bac2;
}
.ltab.active {
  width: 42px;
  background: #3b4453;
  color: #fff;
}
.lplus {
  width: 20px;
  height: 15px;
  margin-left: 4px;
  background: #2e3744;
  border-radius: 0 0 6px 6px;
  text-align: center;
  font-size: 15px;
  line-height: 14px;
  color: #b5bac2;
}
.status {
  display: flex;
  gap: 3px;
  padding-top: 1px;
  height: 24px;
}
.sg {
  flex: none;
  display: flex;
  align-items: stretch;
  background: #3b4453;
  white-space: nowrap;
}
.sitem {
  flex: none;
  display: flex;
  align-items: center;
  justify-content: center;
}
.sitem.on {
  background: #5a8dc2;
}
.scaret {
  flex: none;
  display: flex;
  align-items: center;
  justify-content: center;
}
.stext {
  flex: none;
  line-height: 24px;
}
.coord {
  text-align: right;
  color: #aab2bd;
  letter-spacing: -0.1px;
}
.model {
  text-align: center;
  color: #eceef0;
}
.scale-t {
  padding-left: 3px;
  box-sizing: border-box;
  color: #d6d9dd;
  letter-spacing: -0.4px;
}
.unit-t {
  padding-left: 5px;
  box-sizing: border-box;
  color: #d6d9dd;
}

/* 覆盖层 */
.tooltip {
  position: absolute;
  left: 480px;
  top: 164px;
  width: 346px;
  height: 183px;
  box-sizing: border-box;
  padding: 8px 8px 0;
  background: #ececec;
  border-radius: 3px;
  color: #3a3a3a;
}
.tt-title {
  font-weight: 700;
}
.tt-sub {
  margin-top: 6px;
}
.tt-desc {
  margin: 18px 0 0 1px;
  color: #bdbdbd;
  width: 326px;
  line-height: 17px;
}
.tt-line {
  height: 1px;
  background: #c4c4c4;
  margin: 9px 0 0 -6px;
  width: 338px;
}
.tt-cmd {
  margin-top: 5px;
  display: flex;
  align-items: center;
  gap: 4px;
  font-weight: 700;
}
.tt-help {
  margin-top: 8px;
  font-weight: 700;
  color: #4a4a4a;
}
.ime {
  position: absolute;
  left: 951px;
  top: 1011px;
  width: 59px;
  height: 25px;
  border-radius: 6px;
  background: #fff;
  color: #222;
  display: flex;
  align-items: center;
  justify-content: center;
  gap: 3px;
  white-space: nowrap;
}
.marks {
  position: absolute;
  left: 0;
  top: 0;
  pointer-events: none;
}
.wm-cn {
  position: absolute;
  left: 1803px;
  top: 985px;
  font-size: 21px;
  line-height: 26px;
  font-weight: 700;
  color: #1c5f96;
  white-space: nowrap;
}
.wm-en {
  position: absolute;
  left: 1806px;
  top: 1012px;
  font-size: 17px;
  line-height: 20px;
  color: rgba(46, 140, 70, 0.5);
  white-space: nowrap;
}
</style>
